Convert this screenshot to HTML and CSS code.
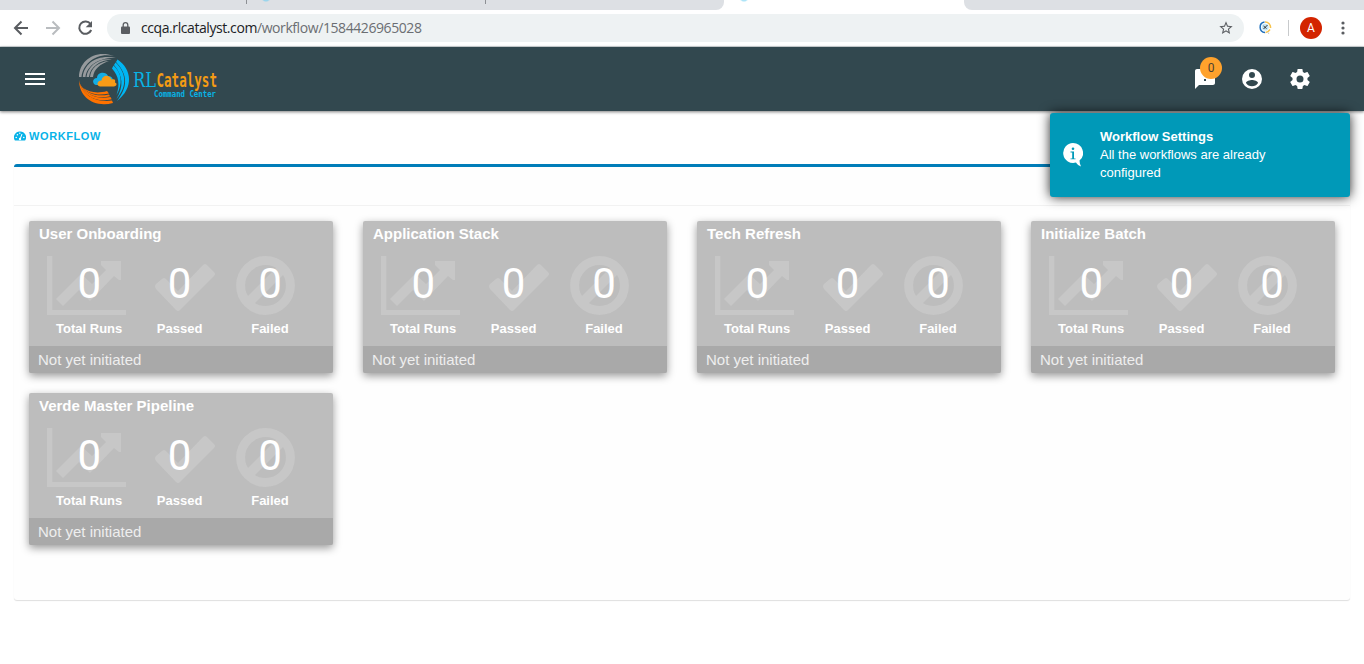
FILE: index.html
```html
<!DOCTYPE html>
<html lang="en">
<head>
<meta charset="utf-8">
<title>Workflow</title>
<link rel="stylesheet" href="styles.css">
</head>
<body>
<svg class="symbols" aria-hidden="true">
  <symbol id="chart" viewBox="0 0 79 59"><path d="M0 0h5.300v54H79v5H0z"/><path d="M9 43L34 18l11 10L59 14 54 9V5h20v19h-2l-5-4-24 25-11-11L16 50z"/></symbol>
  <symbol id="check" viewBox="0 0 60 47"><path d="M1 20l6-5q2-2 4 0l12 12L48 1q2-2 4 0l7 7q2 2 0 4L25 46q-2 2-4 0L1 25q-2-3 0-5z"/></symbol>
  <symbol id="ban" viewBox="0 0 59 59"><circle cx="29.500" cy="29.500" r="24.900" fill="none" stroke="currentColor" stroke-width="9"/><path d="M10.500 41.500L41.500 10.500l7 7-31 31z"/></symbol>
</svg>

<div class="tabs"><div class="tab first"></div><div class="tab second"></div><div class="tab third"></div><div class="tab active"></div><div class="tab rest"></div></div>
<div class="toolbar">
  <svg class="nav-icon" viewBox="0 0 16 16"><path d="M15 8H2M8.500 1.500L2 8l6.500 6.500" fill="none" stroke="#5a5d61" stroke-width="2"/></svg>
  <svg class="nav-icon" viewBox="0 0 16 16"><path d="M1 8h13M7.500 1.500L14 8l-6.500 6.500" fill="none" stroke="#b9bcbf" stroke-width="2"/></svg>
  <svg class="nav-icon" viewBox="0 0 16 16"><path d="M13.500 4A6.200 6.200 0 1 0 14.200 10" fill="none" stroke="#5a5d61" stroke-width="2"/><path d="M15 1v6.300H8.700z" fill="#5a5d61"/></svg>
  <div class="address">
    <svg class="lock" viewBox="0 0 9 12"><path d="M2.200 5V3a2.300 2.300 0 0 1 4.600 0v2" fill="none" stroke="#5a5d61" stroke-width="1.300"/><rect y="4.500" width="9" height="7.500" rx="1" fill="#5a5d61"/></svg>
    <span class="url"><b>ccqa.rlcatalyst.com</b>/workflow/1584426965028</span>
    <svg class="star" viewBox="0 0 24 24"><path d="M22 9.240l-7.190-.62L12 2 9.190 8.630 2 9.240l5.460 4.730L5.820 21 12 17.270 18.180 21l-1.630-7.030L22 9.240zM12 15.400l-3.760 2.270 1-4.280-3.320-2.880 4.380-.38L12 6.100l1.710 4.040 4.380.38-3.320 2.880 1 4.280L12 15.400z"/></svg>
  </div>
  <svg class="extension" viewBox="0 0 13 14"><circle cx="6.200" cy="6.200" r="3.400" fill="#c2e6f6"/><path d="M5.500 1A5.300 5.300 0 0 0 6 11.500" fill="none" stroke="#1f70bd" stroke-width="1.500"/><path d="M6 1A5.300 5.300 0 0 1 11.500 7" fill="none" stroke="#f7c34c" stroke-width="1.500"/><path d="M11 8.500Q9 11.500 6.500 11.400" fill="none" stroke="#f7c34c" stroke-width="1.500"/><path d="M8.500 11l1.500 2" stroke="#ccc"/><path d="M4.500 8L8.500 4M4.500 5l3 2.500" stroke="#333"/></svg>
  <span class="separator"></span>
  <span class="avatar">A</span>
  <svg class="more" viewBox="0 0 4 14"><circle cx="2" cy="2" r="1.600"/><circle cx="2" cy="7" r="1.600"/><circle cx="2" cy="12" r="1.600"/></svg>
</div>

<header class="header">
  <svg class="menu" viewBox="0 0 20 12"><path d="M0 0h20v2H0zM0 5h20v2H0zM0 10h20v2H0z"/></svg>
  <svg class="logo" viewBox="0 0 144 56">
    <g fill="#969a9d">
      <path d="M1 26C1 10 17-2 36 5 19 1 5 12 3.500 26z"/>
      <path d="M4.800 26C6 12 20 3 38 7 22 6 9 14 7.500 26z"/>
      <path d="M8.500 26C10 15 20 7 34 8.500 22 9 12 16 11 26z"/>
      <path d="M12 26C13 17 20 11 31 10 22 13 16 18 15 26z"/>
    </g>
    <g fill="#ff7200">
      <path d="M1 29C3 42 15 52 34 49.500L35 52C16 57 1 46 1 29z"/>
      <path d="M1.500 32C7 43 18 49 32.500 46l1.200 2.300C17 52 5 44 1.500 32z"/>
      <path d="M3 35C10 43 19 46 31 43.500l1 1.800C19 48.500 9 44 3 35z"/>
      <path d="M5 37c6 4 14 6 24 3l2 2.400C20 45 11 43 5 37z"/>
    </g>
    <g fill="#00b6f4">
      <path d="M39.500 8.500C54 18 56 37 39 50 50 36 50 24 38 11z"/>
      <path d="M37.500 11.500C48 21 50 35 38.500 48 46 35 45 25 36 14z"/>
      <path d="M35.500 14.500C44 22 45 33 38.500 44 42 34 41 25 34 17.500z"/>
    </g>
    <path d="M18 34c-4-1-4-7 1-7 0-6 9-7 11-2 3 0 4 1 5 4l-13 5z" fill="#14aee5"/>
    <path d="M22 35.500c-4-1-3-6 1.500-6 1-6 8-6 10-1 4-1 4 1 3.500 3 3 1 1 4-1 4z" fill="#f79b17"/>
    <text class="brand-rl" x="55" y="35.500" textLength="23" lengthAdjust="spacingAndGlyphs">RL</text>
    <text class="brand-name" x="78.500" y="35.500" textLength="60.500" lengthAdjust="spacingAndGlyphs">Catalyst</text>
    <text class="brand-sub" x="76" y="46" textLength="62" lengthAdjust="spacingAndGlyphs">Command Center</text>
  </svg>
  <div class="actions">
    <div class="messages">
      <svg viewBox="0 0 24 24"><path d="M20 2H4c-1.100 0-2 .9-2 2v18l4-4h14c1.100 0 2-.9 2-2V4c0-1.100-.9-2-2-2zm-7 12h-2v-2h2z"/></svg>
      <span class="count">0</span>
    </div>
    <svg viewBox="0 0 24 24"><path d="M12 2a10 10 0 1 0 0 20 10 10 0 0 0 0-20zm0 3a3 3 0 1 1 0 6 3 3 0 0 1 0-6zm0 14.200a7.200 7.200 0 0 1-6-3.220c.03-1.990 4-3.080 6-3.080s5.970 1.090 6 3.080a7.200 7.200 0 0 1-6 3.220z"/></svg>
    <svg viewBox="0 0 24 24"><path d="M19.430 12.980c.04-.32.07-.64.07-.98s-.03-.66-.07-.98l2.110-1.650c.19-.15.24-.42.12-.64l-2-3.460c-.12-.22-.39-.3-.61-.22l-2.490 1c-.52-.4-1.080-.73-1.690-.98l-.38-2.650C14.460 2.180 14.250 2 14 2h-4c-.25 0-.46.18-.49.42l-.38 2.650c-.61.25-1.170.59-1.690.98l-2.490-1c-.23-.09-.49 0-.61.22l-2 3.460c-.13.22-.07.49.12.64l2.110 1.650c-.04.32-.07.65-.07.98s.03.66.07.98l-2.110 1.650c-.19.15-.24.42-.12.64l2 3.460c.12.22.39.3.61.22l2.490-1c.52.4 1.080.73 1.690.98l.38 2.650c.03.24.24.42.49.42h4c.25 0 .46-.18.49-.42l.38-2.650c.61-.25 1.170-.59 1.690-.98l2.490 1c.23.09.49 0 .61-.22l2-3.460c.12-.22.07-.49-.12-.64l-2.110-1.650zM12 15.500a3.500 3.500 0 1 1 0-7 3.500 3.500 0 0 1 0 7z"/></svg>
  </div>
</header>

<main class="page">
  <h1 class="title">
    <svg viewBox="0 0 12 10"><path d="M6 .5A5.800 5.800 0 0 0 .9 9.500h10.200A5.800 5.800 0 0 0 6 .5z" fill="#08b3e8"/><path d="M6 8.500L8 3" stroke="#fff" stroke-width="1"/><g fill="#fff"><circle cx="6" cy="8" r="1.200"/><circle cx="2.200" cy="6.500" r=".8"/><circle cx="3.400" cy="3.700" r=".8"/><circle cx="5.800" cy="2.300" r=".7"/><circle cx="9.800" cy="6.500" r=".8"/></g></svg>
    <span>WORKFLOW</span>
  </h1>
  <section class="panel">
    <div class="panel-head"></div>
    <div class="cards">
      <article class="card"><h2>User Onboarding</h2><div class="metrics"><div class="metric"><svg class="chart"><use href="#chart"/></svg><strong>0</strong><span>Total Runs</span></div><div class="metric"><svg class="check"><use href="#check"/></svg><strong>0</strong><span>Passed</span></div><div class="metric"><svg class="ban"><use href="#ban"/></svg><strong>0</strong><span>Failed</span></div></div><footer>Not yet initiated</footer></article>
      <article class="card"><h2>Application Stack</h2><div class="metrics"><div class="metric"><svg class="chart"><use href="#chart"/></svg><strong>0</strong><span>Total Runs</span></div><div class="metric"><svg class="check"><use href="#check"/></svg><strong>0</strong><span>Passed</span></div><div class="metric"><svg class="ban"><use href="#ban"/></svg><strong>0</strong><span>Failed</span></div></div><footer>Not yet initiated</footer></article>
      <article class="card"><h2>Tech Refresh</h2><div class="metrics"><div class="metric"><svg class="chart"><use href="#chart"/></svg><strong>0</strong><span>Total Runs</span></div><div class="metric"><svg class="check"><use href="#check"/></svg><strong>0</strong><span>Passed</span></div><div class="metric"><svg class="ban"><use href="#ban"/></svg><strong>0</strong><span>Failed</span></div></div><footer>Not yet initiated</footer></article>
      <article class="card"><h2>Initialize Batch</h2><div class="metrics"><div class="metric"><svg class="chart"><use href="#chart"/></svg><strong>0</strong><span>Total Runs</span></div><div class="metric"><svg class="check"><use href="#check"/></svg><strong>0</strong><span>Passed</span></div><div class="metric"><svg class="ban"><use href="#ban"/></svg><strong>0</strong><span>Failed</span></div></div><footer>Not yet initiated</footer></article>
      <article class="card"><h2>Verde Master Pipeline</h2><div class="metrics"><div class="metric"><svg class="chart"><use href="#chart"/></svg><strong>0</strong><span>Total Runs</span></div><div class="metric"><svg class="check"><use href="#check"/></svg><strong>0</strong><span>Passed</span></div><div class="metric"><svg class="ban"><use href="#ban"/></svg><strong>0</strong><span>Failed</span></div></div><footer>Not yet initiated</footer></article>
    </div>
  </section>
</main>

<aside class="toast">
  <svg viewBox="0 0 20 24"><path d="M10 0a10 10 0 0 1 6.500 17.600c0 2 .5 4 1.500 6-2-1-4-2-5-4A10 10 0 1 1 10 0z" fill="#fff"/><circle cx="10" cy="5.800" r="1.300" fill="#0099b8"/><path d="M7.500 8.500h3.500v7h1.500v.8h-5v-.8H9.200v-6H7.500z" fill="#0099b8"/></svg>
  <div><strong>Workflow Settings</strong><p>All the workflows are already configured</p></div>
</aside>
</body>
</html>
```

FILE: styles.css
```css
* { box-sizing: border-box; }
body { margin: 0; height: 664px; overflow: hidden; background: #fff; font-family: "Liberation Sans", Arial, sans-serif; }
svg { display: block; flex: none; }
.symbols { position: absolute; width: 0; height: 0; }

.tabs { display: flex; height: 10px; background: #fff; }
.tab { background: #dde0e4; }
.tab.first { width: 247px; }
.tab.second { width: 239px; background: radial-gradient(ellipse 4px 2px at 19px 0, #9bd5ec 50%, transparent 100%) #dde0e4; }
.tab.first, .tab.second { border-style: solid; border-image: linear-gradient(#8d9094 40%, #dde0e4 40%) 1; border-width: 0 1px 0 0; }
.tab.third { width: 238px; border-radius: 0 0 8px 0; }
.tab.active { width: 240px; background: radial-gradient(ellipse 4px 2px at 20px 0, #aee4f7 50%, transparent 100%) #fff; }
.tab.rest { flex: 1; border-radius: 0 0 0 8px; }

.toolbar { display: flex; align-items: center; height: 37px; padding-left: 13px; border-bottom: 1px solid #d4d9db; background: #fff; }
.nav-icon { width: 16px; height: 16px; margin-right: 16px; }
.address { display: flex; align-items: center; width: 1137px; height: 28px; margin-left: -2px; padding: 0 10px 0 14px; border-radius: 14px; background: #eef2f3; }
.lock { width: 9px; height: 12px; margin-right: 11px; }
.url { flex: 1; color: #6b6e72; font: 14px/28px "Open Sans", sans-serif; letter-spacing: -0.42px; }
.url b { color: #202124; font-weight: 400; }
.star { width: 16px; height: 16px; fill: #5a5d61; }
.extension { width: 13px; height: 14px; margin-left: 15px; }
.separator { width: 1px; height: 16px; margin-left: 16px; background: #c8cacc; }
.avatar { width: 22px; height: 22px; margin-left: 11px; border-radius: 50%; background: #d32400; color: #fff; font: 12px/22px Roboto, sans-serif; text-align: center; }
.more { width: 4px; height: 14px; margin-left: 19px; fill: #5a5d61; }

.header { position: relative; display: flex; align-items: center; height: 64px; padding: 0 52px 0 25px; background: #32484f; box-shadow: 0 1px 3px rgba(0,0,0,.5); }
.menu { width: 20px; height: 12px; fill: #fff; }
.logo { width: 144px; height: 56px; margin-left: 33px; overflow: visible; }
.brand-rl { fill: #08b3e5; font: 19.5px "DejaVu Serif", serif; }
.brand-name { fill: #f39b14; font: bold 19px "DejaVu Sans Mono", monospace; }
.brand-sub { fill: #08b3e5; font: bold 8px "DejaVu Sans Mono", monospace; }
.actions { display: flex; gap: 24px; margin-left: auto; }
.actions svg { width: 24px; height: 24px; fill: #fff; }
.messages { position: relative; left: 1px; margin-right: 0; }
.count { position: absolute; left: 7px; top: -10px; width: 22px; height: 22px; border-radius: 50%; background: #ffa22c; color: #4b4030; font: 12px/22px Roboto, sans-serif; text-align: center; }

.page { padding: 18px 14px 0; }
.title { display: flex; align-items: center; gap: 3px; height: 14px; margin: 0 0 21px; color: #08b3e8; font-size: 11px; letter-spacing: .6px; }
.title svg { width: 12px; height: 10px; }
.panel { height: 436px; border-top: 3px solid #007db9; border-radius: 3px; background: #fefefe; box-shadow: 0 1px 1px rgba(0,0,0,.13); }
.panel-head { height: 39px; border-bottom: 1px solid #f2f2f2; }
.cards { display: grid; grid-template-columns: repeat(4, 304px); gap: 20px 30px; padding: 15px; }
.card { height: 152px; overflow: hidden; border-radius: 2px; background: #bdbdbd; box-shadow: 0 3px 8px rgba(0,0,0,.4); color: #fff; }
.card h2 { height: 35px; margin: 0; padding: 4px 10px 0; font-size: 15px; line-height: 18px; }
.metrics { display: grid; grid-template-columns: repeat(3, 90.4px); height: 90px; padding-left: 15px; }
.metric { display: grid; grid-template-rows: 59px 25px; justify-items: center; }
.metric svg, .metric strong { grid-area: 1 / 1; }
.metric svg { fill: #c7c7c7; color: #c7c7c7; }
.metric strong { font: 42px/55px Roboto, sans-serif; z-index: 1; }
.metric > span { font-size: 13px; line-height: 27px; font-weight: 700; }
.chart { width: 79px; height: 59px; margin-right: 5px; }
.check { width: 60px; height: 47px; margin: 8px 0 0 10px; }
.ban { width: 59px; height: 59px; margin-right: 9px; }
.card footer { height: 27px; padding-left: 9px; background: #a9a9a9; color: #eee; font-size: 15px; line-height: 27px; }

.toast { position: absolute; left: 1050px; top: 113px; display: flex; align-items: center; width: 300px; height: 84px; padding: 0 60px 0 13px; border-radius: 3px; background: #0099b8; box-shadow: 0 0 12px rgba(0,0,0,.85); color: #fff; }
.toast svg { width: 20px; height: 24px; margin-right: 17px; }
.toast strong, .toast p { display: block; margin: 0; font-size: 13px; line-height: 18px; }
```
